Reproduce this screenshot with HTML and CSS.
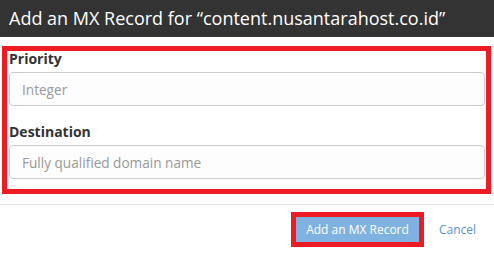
FILE: index.html
```html
<!DOCTYPE html>
<html>
<head>
<meta charset="utf-8">
<link rel="stylesheet" href="styles.css">
</head>
<body>
<div class="modal">
  <div class="modal-header">Add an MX Record for “content.nusantarahost.co.id”</div>
  <div class="modal-body highlight">
    <label class="field-label">Priority</label>
    <input class="field-input" type="text" placeholder="Integer">
    <label class="field-label second">Destination</label>
    <input class="field-input" type="text" placeholder="Fully qualified domain name">
  </div>
  <div class="modal-footer">
    <span class="btn-wrap highlight"><button class="btn-primary">Add an MX Record</button></span>
    <a class="cancel-link" href="#">Cancel</a>
  </div>
</div>
</body>
</html>
```
FILE: styles.css
```css
html, body {
  margin: 0;
  padding: 0;
  background: #fff;
}
.modal {
  width: 494px;
  height: 255px;
  font-family: "Open Sans", "Liberation Sans", sans-serif;
  color: #333;
}
.modal-header {
  background: #333333;
  color: #fff;
  height: 37px;
  box-sizing: border-box;
  padding-left: 9px;
  font-size: 18px;
  line-height: 36px;
  white-space: nowrap;
}
.highlight {
  border: 5px solid #ed1c24;
}
.modal-body {
  margin: 9px 3px 0 2px;
  padding: 0 1px 10px 2px;
  display: flex;
  flex-direction: column;
}
.field-label {
  font-weight: 700;
  font-size: 14px;
  line-height: 15px;
  color: #333;
  margin-bottom: 6px;
}
.field-label.second {
  margin-top: 18px;
}
.field-input {
  height: 34px;
  box-sizing: border-box;
  border: 1px solid #ccc;
  border-radius: 4px;
  background: #fdfdfd;
  padding: 0 12px;
  font-family: "Open Sans", "Liberation Sans", sans-serif;
  font-size: 13.6px;
  color: #555;
  outline: none;
}
.field-input::placeholder {
  color: #999;
}
.modal-footer {
  margin-top: 10px;
  border-top: 1px solid #e5e5e5;
  padding: 7px 0 0 291px;
  display: flex;
  align-items: center;
}
.btn-wrap {
  display: inline-flex;
}
.btn-primary {
  background: #7fb2e0;
  border: none;
  color: #fff;
  font-family: "Open Sans", "Liberation Sans", sans-serif;
  font-size: 12px;
  height: 25px;
  width: 123px;
  padding: 0;
}
.cancel-link {
  margin-left: 15px;
  color: #5a93d3;
  font-size: 12px;
  text-decoration: none;
}
```
